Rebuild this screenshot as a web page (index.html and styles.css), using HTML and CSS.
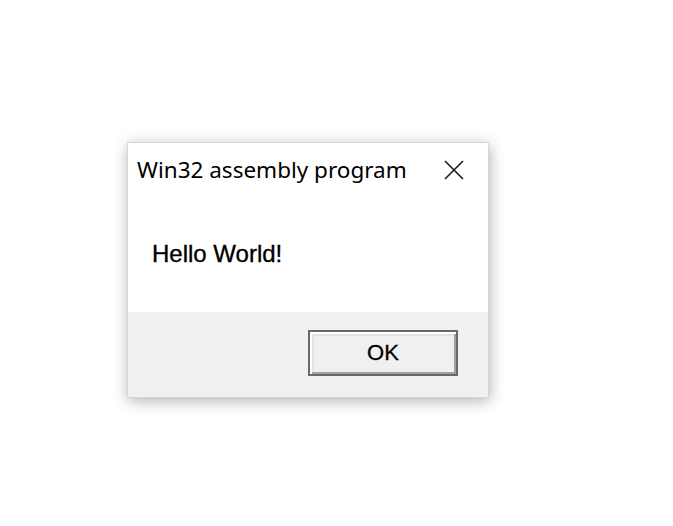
FILE: index.html
```html
<!DOCTYPE html>
<html>
<head>
<meta charset="utf-8">
<link rel="stylesheet" href="styles.css">
</head>
<body>
<div class="dialog">
  <div class="titlebar">
    <span class="title">Win32 assembly program</span>
    <span class="close">
      <svg width="20" height="20" viewBox="0 0 20 20"><path d="M1 1 L19 19 M19 1 L1 19" stroke="#1a1a1a" stroke-width="1.6" fill="none"/></svg>
    </span>
  </div>
  <div class="content">
    <p class="message">Hello World!</p>
  </div>
  <div class="footer">
    <button class="btn">OK</button>
  </div>
</div>
</body>
</html>
```
FILE: styles.css
```css
html, body {
  margin: 0;
  padding: 0;
  background: #ffffff;
}
body {
  width: 673px;
  height: 526px;
  overflow: hidden;
}
.dialog {
  margin-left: 127px;
  margin-top: 142px;
  width: 360px;
  height: 254px;
  border: 1px solid #d6d6d6;
  background: #ffffff;
  box-shadow: 1px 3px 14px rgba(0, 0, 0, 0.3);
  display: flex;
  flex-direction: column;
}
.titlebar {
  height: 54px;
  display: flex;
  align-items: center;
  justify-content: space-between;
  padding-left: 9px;
  padding-right: 24px;
}
.title {
  font-family: "Noto Sans", "Open Sans", sans-serif;
  font-size: 22.5px;
  color: #000;
  line-height: 30px;
}
.close {
  display: flex;
  width: 20px;
  height: 20px;
}
.content {
  height: 115px;
  padding-left: 24px;
  box-sizing: border-box;
  padding-top: 43px;
}
.message {
  margin: 0;
  font-family: "Liberation Sans", Arial, sans-serif;
  font-size: 24px;
  line-height: 28px;
  color: #000;
  -webkit-text-stroke: 0.35px #000;
}
.footer {
  flex: 1;
  background: #f0f0f0;
  display: flex;
  justify-content: flex-end;
  align-items: flex-start;
  padding-top: 18px;
  padding-right: 30px;
}
.btn {
  width: 150px;
  height: 46px;
  border: 2px solid #696969;
  background: #f0f0f0;
  box-shadow: inset 2px 2px 0 #ffffff, inset -2px -2px 0 #a0a0a0, inset 4px 4px 0 #e3e3e3;
  font-family: "Liberation Sans", Arial, sans-serif;
  font-size: 22px;
  color: #000;
  -webkit-text-stroke: 0.3px #000;
  padding: 0;
  margin: 0;
  line-height: 40px;
}
```
